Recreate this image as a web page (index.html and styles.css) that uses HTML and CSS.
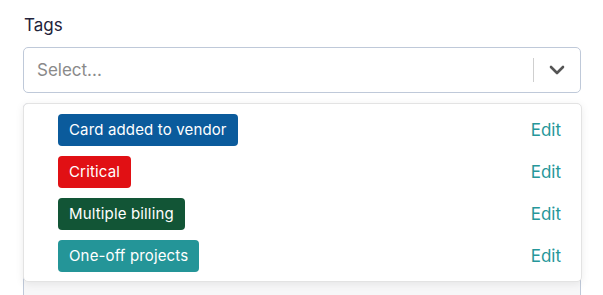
FILE: index.html
```html
<!DOCTYPE html>
<html lang="en">

<head>
    <meta charset="UTF-8">
    <meta name="viewport" content="width=device-width, initial-scale=1.0">
    <title>Tags</title>
    <link rel="stylesheet" href="styles.css">
</head>

<body>
    <div class="field">
        <label class="field-label" for="tags">Tags</label>
        <div class="select">
            <input type="text" id="tags" class="select-input" placeholder="Select..." autofocus>
            <span class="select-sep"></span>
            <span class="select-arrow">
                <svg width="16" height="10" viewBox="0 0 16 10">
                    <path d="M2 2 L8 8 L14 2" fill="none" stroke="#555" stroke-width="2.6" stroke-linecap="round" stroke-linejoin="round"/>
                </svg>
            </span>
        </div>
        <div class="below">
            <div class="below-box"></div>
            <ul class="menu">
                <li class="menu-item">
                    <span class="tag tag-blue">Card added to vendor</span>
                    <a href="#" class="edit">Edit</a>
                </li>
                <li class="menu-item">
                    <span class="tag tag-red">Critical</span>
                    <a href="#" class="edit">Edit</a>
                </li>
                <li class="menu-item">
                    <span class="tag tag-green">Multiple billing</span>
                    <a href="#" class="edit">Edit</a>
                </li>
                <li class="menu-item">
                    <span class="tag tag-teal">One-off projects</span>
                    <a href="#" class="edit">Edit</a>
                </li>
            </ul>
        </div>
    </div>
</body>

</html>
```

FILE: styles.css
```css
body {
    font-family: Inter, "Noto Sans", sans-serif;
    margin: 0;
    background: #fff;
    overflow: hidden;
}

.field {
    width: 558px;
    margin: 14px 0 0 23px;
}

.field-label {
    display: block;
    font-size: 17px;
    color: #23233a;
    margin-left: 1px;
    line-height: 22px;
}

.select {
    display: flex;
    align-items: center;
    height: 46px;
    box-sizing: border-box;
    margin-top: 11px;
    border: 1px solid #bfc9d9;
    border-radius: 5px;
    background: #fff;
}

.select-input {
    flex: 1;
    border: none;
    outline: none;
    padding: 0 0 0 13px;
    font-family: inherit;
    font-size: 17px;
    color: #333;
    background: transparent;
    caret-color: #222;
}

.select-input::placeholder {
    color: #8a8a8a;
}

.select-sep {
    width: 1px;
    height: 24px;
    background: #cfcfcf;
}

.select-arrow {
    display: flex;
    align-items: center;
    justify-content: center;
    width: 46px;
    height: 100%;
}

.below {
    position: relative;
    margin-top: 10px;
}

.below-box {
    height: 200px;
    border: 1px solid #bfc9d9;
    border-radius: 5px;
    background: #f7f7f8;
}

.menu {
    position: absolute;
    top: 0;
    left: 0;
    right: -1px;
    list-style: none;
    margin: 0;
    padding: 10px 20px 9px 34px;
    background: #fff;
    border: 1px solid #e3e3e3;
    border-radius: 5px;
    box-shadow: 0 2px 8px rgba(0, 0, 0, 0.08);
}

.menu-item {
    display: flex;
    align-items: center;
    justify-content: space-between;
    height: 32px;
}

.menu-item + .menu-item {
    margin-top: 10px;
}

.tag {
    display: inline-block;
    height: 32px;
    line-height: 32px;
    padding: 0 11px;
    border-radius: 4px;
    color: #fff;
    font-size: 15px;
    font-weight: 400;
    letter-spacing: 0.15px;
}

.tag-blue {
    background-color: #0b5b9c;
}

.tag-red {
    background-color: #e11014;
}

.tag-green {
    background-color: #125536;
}

.tag-teal {
    background-color: #249598;
}

.edit {
    color: #26979a;
    font-size: 17px;
    text-decoration: none;
}
```
